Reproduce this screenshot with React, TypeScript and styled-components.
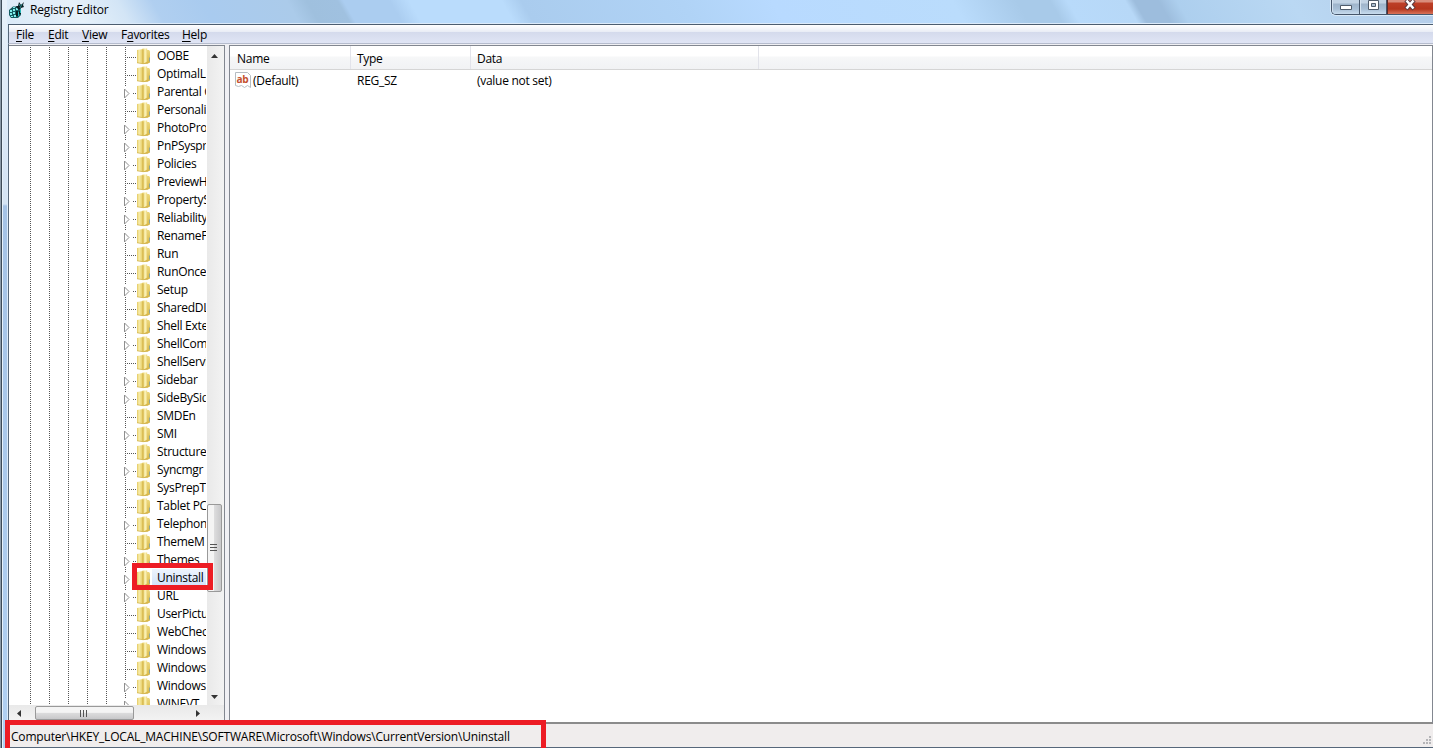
import React from "react";
import styled, { createGlobalStyle } from "styled-components";

const Global = createGlobalStyle`
  * { box-sizing: border-box; }
  body { margin: 0; overflow: hidden; background: #fff; }
`;

const Desktop = styled.div`
  position: relative;
  width: 1433px;
  height: 748px;
  overflow: hidden;
  display: flex;
  background: #b4d0ee;
  color: #000;
  font: 12px/18px "Open Sans", "Noto Sans", sans-serif;
  white-space: nowrap;
`;

const OuterEdge = styled.div`
  width: 8px;
  flex: none;
  background:
    linear-gradient(90deg, #8b9aa8 0 1px, #3d4a57 1px 2px, #e6f1fb 2px 3px, transparent 3px 7px, #dcebfa 7px 8px),
    linear-gradient(180deg, #e8f1fa 0, #d5e4f4 180px, #d5e4f4 204px, #a5c3e6 206px, #b1d0f2 100%);
`;

const Window = styled.div`
  flex: 1;
  min-width: 0;
  display: flex;
  flex-direction: column;
`;

// Slanted glass reflections: [centre x in the title bar, colour]
const glass: [number, string][] = [
  [0, "#dceaf7"], [70, "#e6f1fa"], [115, "#d3e5f6"], [150, "#b0cff0"], [200, "#a9cbef"], [285, "#abcbea"],
  [305, "#9fc0de"], [336, "#a0c1e0"], [342, "#abcdf0"], [388, "#abcdf0"], [408, "#badcfc"],
  [500, "#badcfc"], [520, "#aaccee"], [680, "#b0d3f6"], [770, "#b8daff"], [950, "#badcfc"],
  [1015, "#a8cae9"], [1048, "#a8cae9"], [1066, "#b8dafa"], [1124, "#b7d8f7"], [1133, "#9dbddd"],
  [1157, "#9dbddd"], [1175, "#adcfee"], [1290, "#bad8f3"], [1425, "#b4cde9"],
];

const TitleBar = styled.header`
  height: 25px;
  flex: none;
  display: flex;
  align-items: flex-start;
  border-bottom: 1px solid #4c5d70;
  box-shadow: inset 0 -1px #dcebfa;
  background: linear-gradient(
    60deg,
    ${glass.map(([x, c]) => `${c} ${Math.round(x * 0.866 + 6)}px`).join(", ")}
  );
`;

const Title = styled.h1`
  margin: 1px 0 0 5px;
  flex: 1;
  font-size: 12px;
  font-weight: 400;
  letter-spacing: -0.17px;
`;

const Caption = styled.div`
  display: flex;
  height: 15px;
  border: 1px solid #46566b;
  border-top: 0;
  border-right: 0;
  border-radius: 0 0 0 5px;
  box-shadow: 0 0 0 1px #d9e9f7;
  overflow: hidden;
`;

const CaptionButton = styled.div<{ $w: number; $close?: boolean }>`
  width: ${(p) => p.$w}px;
  padding-right: 2px;
  display: flex;
  justify-content: center;
  border-left: 1px solid ${(p) => (p.$close ? "#5a2a2a" : "#d5e3f0")};
  background: ${(p) =>
    p.$close
      ? "linear-gradient(180deg, #d98d7c 0 2px, #bd3f27 3px, #b5361d 9px, #d9735a 14px)"
      : "linear-gradient(180deg, #c2d3e4 0 3px, #9fb4ca 4px, #a8bfd6 9px, #c8dcee 14px)"};
  & + & { box-shadow: -1px 0 #46566b; }
`;

const MenuBar = styled.nav`
  height: 19px;
  flex: none;
  display: flex;
  padding-left: 7px;
  gap: 13px;
  border-left: 1px solid #56677a;
  border-bottom: 1px solid #b5bccd;
  background: linear-gradient(180deg, #fff 0, #e8ecf5 7px, #d4daec 7px, #e0e5f5 18px);
`;

const MenuItem = styled.span<{ $w: number }>`
  width: ${(p) => p.$w}px;
  line-height: 20px;
  letter-spacing: -0.25px;
  u { text-underline-offset: 2px; }
`;

const Body = styled.main`
  flex: 1;
  min-height: 0;
  display: flex;
  padding-top: 1px;
  background: #f0f0f4;
  border-left: 1px solid #56677a;
`;

const TreePane = styled.section`
  width: 216px;
  display: flex;
  flex-direction: column;
  border: 1px solid #828790;
  border-left-width: 0;
  border-bottom: 0;
  background: #fff;
`;

const TreeArea = styled.div`
  height: 659px;
  display: flex;
`;

const TreeView = styled.div`
  width: 197px;
  height: 100%;
  margin-right: 1px;
  overflow: hidden;
  padding-top: 1px;
`;

const TreeRow = styled.div`
  height: 18px;
  display: flex;
`;

const Label = styled.span<{ $selected?: boolean }>`
  height: 18px;
  padding: 0 3px;
  margin-left: 2px;
  letter-spacing: -0.3px;
  ${(p) =>
    p.$selected &&
    `
    margin-left: 0;
    padding-left: 5px;
    background: linear-gradient(180deg, #eef4fd, #cfe1fb);
  `}
`;

const VScroll = styled.div`
  width: 17px;
  display: flex;
  flex-direction: column;
  background: linear-gradient(90deg, #e9e9e9, #f3f3f3);
`;

const VTrack = styled.div`
  flex: 1;
  display: flex;
  flex-direction: column;
  justify-content: flex-end;
  padding-bottom: 96px;
`;

const Glyph = styled.svg`
  display: block;
  flex: none;
`;

const VThumb = styled.div`
  height: 88px;
  width: 15px;
  padding-right: 2px;
  padding-bottom: 1px;
  display: flex;
  align-items: center;
  justify-content: center;
  border: 1px solid #999;
  border-radius: 2px;
  background: linear-gradient(90deg, #f4f4f4 0 45%, #dcdcdd 50%, #c8c8ca);
`;

const HScroll = styled.div`
  height: 16px;
  display: flex;
  background: linear-gradient(180deg, #e9e9e9, #f3f3f3);
`;

const HThumb = styled.div`
  width: 99px;
  height: 14px;
  margin-top: 1px;
  padding-right: 2px;
  display: flex;
  align-items: center;
  justify-content: center;
  border: 1px solid #999;
  border-radius: 2px;
  background: linear-gradient(180deg, #f4f4f4 0 45%, #dcdcdd 50%, #c8c8ca);
`;

const ListPane = styled.section`
  flex: 1;
  margin-left: 4px;
  border: 1px solid #828790;
  border-bottom: 2px solid #8b8b8b;
  background: #fff;
`;

const HeaderRow = styled.div`
  height: 24px;
  display: flex;
  border-bottom: 1px solid #d5d5d5;
  background: linear-gradient(180deg, #fff 0 10px, #f6f7f8 11px, #f1f2f4 23px);
`;

const Cell = styled.span<{ $w: number; $line?: boolean }>`
  width: ${(p) => p.$w}px;
  padding-left: 7px;
  line-height: 25px;
  letter-spacing: -0.28px;
  ${(p) => p.$line && "box-shadow: 1px 0 #e2e3ea;"}
`;

const ValueRow = styled.div`
  height: 18px;
  display: flex;
  margin-top: 1px;
  ${Cell} { line-height: 20px; }
`;

const NameCell = styled(Cell)`
  display: flex;
  padding-left: 5px;
  gap: 2px;
`;

const StatusBar = styled.footer`
  height: 24px;
  flex: none;
  display: flex;
  justify-content: space-between;
  padding: 3px 0 0 2px;
  border-left: 1px solid #56677a;
  border-bottom: 1px solid #56677a;
  background: #f0eded;
`;

const Path = styled.span`
  line-height: 20px;
  letter-spacing: -0.19px;
`;

const Highlight = styled.div<{ $x: number; $y: number; $w: number; $h: number }>`
  position: absolute;
  left: ${(p) => p.$x}px;
  top: ${(p) => p.$y}px;
  width: ${(p) => p.$w}px;
  height: ${(p) => p.$h}px;
  border: 5px solid #ed1c24;
`;

const keys: [string, boolean][] = [
  ["OOBE", false], ["OptimalL", false], ["Parental Controls", true], ["Personali", false],
  ["PhotoPro", true], ["PnPSyspr", true], ["Policies", true], ["PreviewH", false],
  ["PropertyS", true], ["Reliability", true], ["RenameF", true], ["Run", false],
  ["RunOnce", false], ["Setup", true], ["SharedDL", false], ["Shell Exte", true],
  ["ShellCom", true], ["ShellServi", false], ["Sidebar", true], ["SideBySid", true],
  ["SMDEn", false], ["SMI", true], ["Structure", false], ["Syncmgr", true],
  ["SysPrepT", false], ["Tablet PC", false], ["Telephon", true], ["ThemeM", false],
  ["Themes", true], ["Uninstall", true], ["URL", true], ["UserPictu", false],
  ["WebChec", false], ["Windows", false], ["Windows", false], ["Windows", true],
  ["WINEVT", true],
];

const Branch = ({ expandable }: { expandable: boolean }) => (
  <Glyph width="143" height="18" viewBox="0 0 143 18">
    <g stroke="#555" strokeDasharray="1 1" fill="none">
      {[21.5, 40.5, 59.5, 78.5, 97.5].map((x) => (
        <path key={x} d={`M${x} 0V18`} />
      ))}
      <path d={expandable ? "M116.5 0V4M116.5 16V18M124 10.5H128" : "M116.5 0V18M118 10.5H128"} />
    </g>
    {expandable && <path d="M115.5 6v9l4.500-4.500z" fill="#fff" stroke="#8f8f8f" />}
    <path d="M128 3 134 2V17l-6-1z" fill="url(#leafBack)" />
    <path d="M134 3h6l1 1.200V15.500l-2 1-5 .5z" fill="url(#leafRight)" />
    <path d="M133.500 1.500h4.700v13L134 17z" fill="url(#leafFront)" />
    <path d="M134 2.500v14" stroke="#cfae43" />
    <path d="M128 15.700 134 16.700l5-.6" stroke="#cfb04b" fill="none" strokeWidth=".7" />
    <path d="M140.500 10.500v4" stroke="#8fa79c" />
  </Glyph>
);

const FolderShades = () => (
  <Glyph width="0" height="0">
    <defs>
      <linearGradient id="leafBack">
        <stop offset="0" stopColor="#e3c860" />
        <stop offset=".35" stopColor="#f8edab" />
        <stop offset="1" stopColor="#e4c95d" />
      </linearGradient>
      <linearGradient id="leafFront">
        <stop offset="0" stopColor="#e9d06a" />
        <stop offset=".6" stopColor="#fbf2b8" />
        <stop offset="1" stopColor="#ecd67a" />
      </linearGradient>
      <linearGradient id="leafRight" x2="0" y2="1">
        <stop offset="0" stopColor="#ecd87e" />
        <stop offset="1" stopColor="#d8b644" />
      </linearGradient>
    </defs>
  </Glyph>
);

const AppIcon = () => (
  <Glyph width="17" height="20" viewBox="0 0 17 20">
    <path d="M1 10 5 6.500h6l2 2.500v6l-3 3H3l-2-3z" fill="#155c62" />
    <path d="M2 10h2v2H2zM5 9h2v2H5zM8 8h2v2H8zM2 13h2v2H2zM5 12h2v2H5zM3 16h2v1H3zM6 15h2v2H6zM5 7h2v1H5z" fill="#7fecea" />
    <path d="M8 11h2v5H8zM11 11h2v3h-2z" fill="#071d20" />
    <path d="M10 12h1v4h-1zM12 9h1v4h-1z" fill="#27b7b8" />
    <path d="m8 6 2 0 1-4 2 3 3-3-1 3 1 2-3 1-2 2-2-2z" fill="#0a1c20" />
    <path d="m11 4 1 2M14 4l-2 4" stroke="#2f8d90" fill="none" />
  </Glyph>
);

export default function App() {
  return (
    <>
      <Global />
      <Desktop>
        <OuterEdge />
        <Window>
          <TitleBar>
            <AppIcon />
            <Title>Registry Editor</Title>
            <Caption>
              <CaptionButton $w={28}>
                <Glyph width="14" height="14"><path d="M1.500 5.500h11v4h-11z" fill="#fff" stroke="#505c6b" /></Glyph>
              </CaptionButton>
              <CaptionButton $w={27}>
                <Glyph width="14" height="14"><path d="M2.500 .5h10v9h-10z" fill="#fff" stroke="#505c6b" /><path d="M5.500 3.500h4v3h-4z" fill="#aebfd0" stroke="#505c6b" /></Glyph>
              </CaptionButton>
              <CaptionButton $w={46} $close>
                <Glyph width="14" height="14"><path d="m3 0 8 9M11 0 3 9" stroke="#5b3c40" strokeWidth="4.500" /><path d="m3.500 .5 7 8M10.500 .5l-7 8" stroke="#fff" strokeWidth="2.500" /></Glyph>
              </CaptionButton>
            </Caption>
          </TitleBar>
          <MenuBar>
            <MenuItem $w={19}><u>F</u>ile</MenuItem>
            <MenuItem $w={21}><u>E</u>dit</MenuItem>
            <MenuItem $w={26}><u>V</u>iew</MenuItem>
            <MenuItem $w={48}>F<u>a</u>vorites</MenuItem>
            <MenuItem $w={26}><u>H</u>elp</MenuItem>
          </MenuBar>
          <Body>
            <FolderShades />
            <TreePane>
              <TreeArea>
                <TreeView>
                  {keys.map(([name, expandable], i) => (
                    <TreeRow key={i}>
                      <Branch expandable={expandable} />
                      <Label $selected={name === "Uninstall"}>{name}</Label>
                    </TreeRow>
                  ))}
                </TreeView>
                <VScroll>
                  <Glyph width="15" height="17"><path d="m4 12 3.500-4 3.500 4z" fill="#333" /></Glyph>
                  <VTrack>
                    <VThumb>
                      <Glyph width="7" height="9"><path d="M0 1.500h7M0 4.500h7M0 7.500h7" stroke="#555" /></Glyph>
                    </VThumb>
                  </VTrack>
                  <Glyph width="15" height="17"><path d="m4 7 3.500 4L11 7z" fill="#333" /></Glyph>
                </VScroll>
              </TreeArea>
              <HScroll>
                <Glyph width="26" height="16"><path d="m12 5-4 3.500 4 3.500z" fill="#333" /></Glyph>
                <HThumb>
                  <Glyph width="9" height="7"><path d="M1.500 0v7M4.500 0v7M7.500 0v7" stroke="#555" /></Glyph>
                </HThumb>
                <Glyph width="80" height="16"><path d="m62 5 4 3.500-4 3.500z" fill="#333" /></Glyph>
              </HScroll>
            </TreePane>
            <ListPane>
              <HeaderRow>
                <Cell $w={120} $line>Name</Cell>
                <Cell $w={120} $line>Type</Cell>
                <Cell $w={288} $line>Data</Cell>
              </HeaderRow>
              <ValueRow>
                <NameCell $w={120}>
                  <Glyph width="16" height="17">
                    <path d="M.5 1.500h12l3 3v12l-3-2-3 2-3-2-3 1-3-1z" fill="#fff" stroke="#b5bcc2" />
                    <text x="1.500" y="11.500" fontSize="11" fontWeight="700" fill="#c5512f" textLength="12" lengthAdjust="spacingAndGlyphs">ab</text>
                  </Glyph>
                  (Default)
                </NameCell>
                <Cell $w={120}>REG_SZ</Cell>
                <Cell $w={288}>(value not set)</Cell>
              </ValueRow>
            </ListPane>
          </Body>
          <StatusBar>
            <Path>Computer\HKEY_LOCAL_MACHINE\SOFTWARE\Microsoft\Windows\CurrentVersion\Uninstall</Path>
            <Glyph width="11" height="20">
              <path d="M7 9h2v2H7zM7 12h2v2H7zM4 12h2v2H4zM7 15h2v2H7zM4 15h2v2H4zM1 15h2v2H1z" fill="#b5b5b8" />
            </Glyph>
          </StatusBar>
        </Window>
        <Highlight $x={132} $y={563} $w={81} $h={27} />
        <Highlight $x={5} $y={720} $w={541} $h={36} />
      </Desktop>
    </>
  );
}
